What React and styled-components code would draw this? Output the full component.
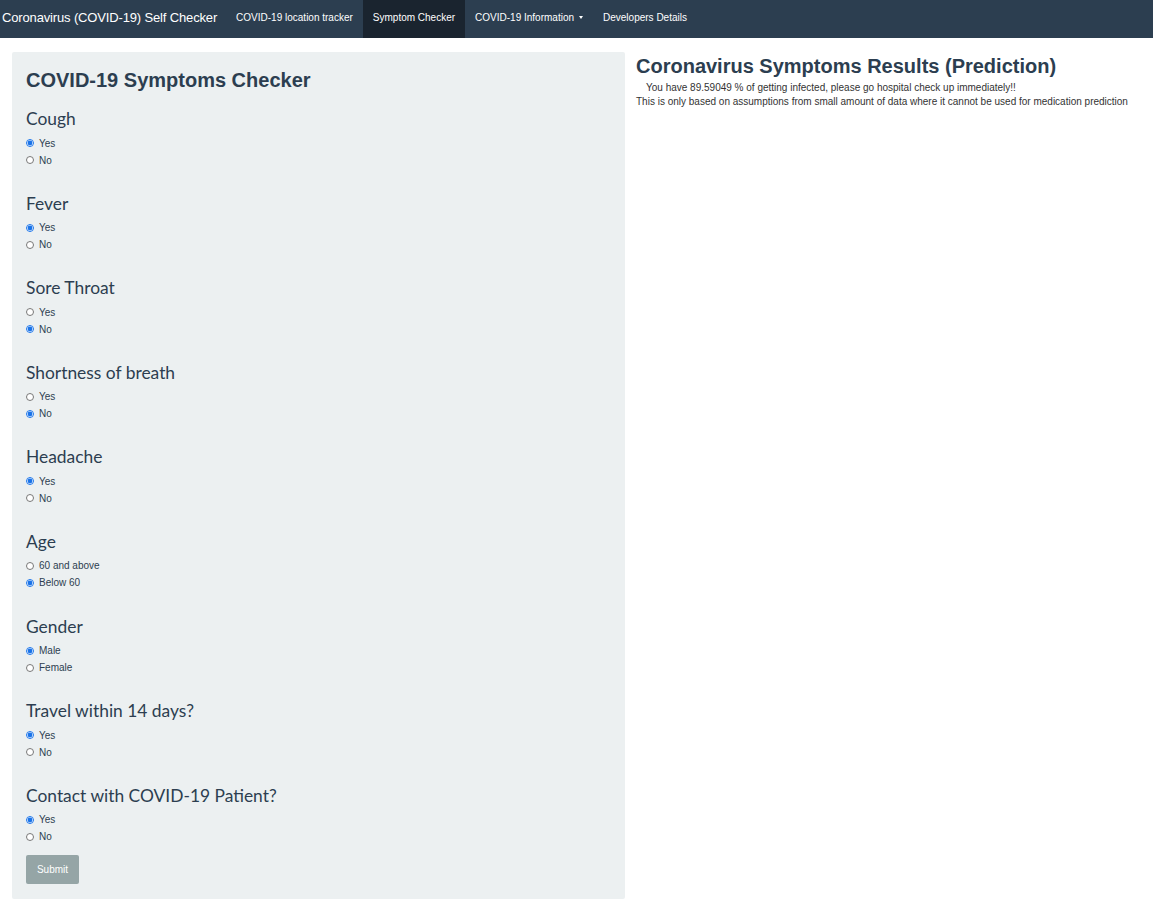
import styled, { createGlobalStyle } from "styled-components"

const GlobalStyle = createGlobalStyle`
  body {
    margin: 0;
    background: #fff;
    font-family: "Liberation Sans", Arial, sans-serif;
    color: #2c3e50;
  }
`

const questions = [
  { label: "Cough", options: ["Yes", "No"], picked: 0 },
  { label: "Fever", options: ["Yes", "No"], picked: 0 },
  { label: "Sore Throat", options: ["Yes", "No"], picked: 1 },
  { label: "Shortness of breath", options: ["Yes", "No"], picked: 1 },
  { label: "Headache", options: ["Yes", "No"], picked: 0 },
  { label: "Age", options: ["60 and above", "Below 60"], picked: 1 },
  { label: "Gender", options: ["Male", "Female"], picked: 0 },
  { label: "Travel within 14 days?", options: ["Yes", "No"], picked: 0 },
  { label: "Contact with COVID-19 Patient?", options: ["Yes", "No"], picked: 0 },
]

const navItems = [
  { text: "COVID-19 location tracker" },
  { text: "Symptom Checker", active: true },
  { text: "COVID-19 Information", caret: true },
  { text: "Developers Details" },
]

export default function App() {
  return (
    <>
      <GlobalStyle />
      <Navbar>
        <Brand>Coronavirus (COVID-19) Self Checker</Brand>
        <NavList>
          {navItems.map((item) => (
            <NavItem key={item.text} $active={item.active}>
              {item.text}
              {item.caret && <Caret />}
            </NavItem>
          ))}
        </NavList>
      </Navbar>
      <Page>
        <Well>
          <Title>COVID-19 Symptoms Checker</Title>
          {questions.map((q, i) => (
            <Group key={q.label}>
              <Label>{q.label}</Label>
              {q.options.map((opt, j) => (
                <Option key={opt}>
                  <Radio type="radio" name={"q" + i} defaultChecked={q.picked === j} />
                  <span>{opt}</span>
                </Option>
              ))}
            </Group>
          ))}
          <SubmitButton>Submit</SubmitButton>
        </Well>
        <Results>
          <ResultsTitle>Coronavirus Symptoms Results (Prediction)</ResultsTitle>
          <ResultText $indent>You have 89.59049 % of getting infected, please go hospital check up immediately!!</ResultText>
          <ResultText>
            This is only based on assumptions from small amount of data where it cannot be used for medication prediction
          </ResultText>
        </Results>
      </Page>
    </>
  )
}

const Navbar = styled.nav`
  display: flex;
  align-items: stretch;
  height: 38px;
  background: #2c3e50;
  color: #fff;
`

const Brand = styled.div`
  display: flex;
  align-items: center;
  padding: 0 9px 4px 2px;
  font-size: 13px;
  letter-spacing: -0.15px;
`

const NavList = styled.div`
  display: flex;
`

const NavItem = styled.div`
  display: flex;
  align-items: center;
  padding: 0 10px 3px;
  font-size: 10px;
  background: ${(p) => (p.$active ? "#1a242f" : "transparent")};
`

const Caret = styled.span`
  display: inline-block;
  margin-left: 5px;
  border-left: 2.5px solid transparent;
  border-right: 2.5px solid transparent;
  border-top: 3px solid #fff;
`

const Page = styled.div`
  display: grid;
  grid-template-columns: 613px 1fr;
  gap: 11px;
  padding: 14px 0 0 12px;
`

const Well = styled.div`
  background: #ecf0f1;
  border-radius: 2px;
  padding: 16px 14px 15px;
`

const Title = styled.h2`
  margin: 0 0 17px;
  font-size: 20px;
  line-height: 24px;
  font-weight: 700;
  color: #2c3e50;
`

const Group = styled.div`
  margin-bottom: 25.1px;
  &:last-of-type {
    margin-bottom: 10px;
  }
`

const Label = styled.div`
  font-family: Lato, "Liberation Sans", sans-serif;
  font-size: 17.4px;
  line-height: 20px;
  color: #2c3e50;
  margin-bottom: 5.5px;
`

const Option = styled.label`
  display: flex;
  align-items: center;
  height: 17px;
  font-size: 10px;
  color: #2c3e50;
  gap: 5px;
`

const Radio = styled.input`
  width: 8px;
  height: 8px;
  margin: 0;
  accent-color: #1a73e8;
`

const SubmitButton = styled.button`
  width: 53px;
  height: 29px;
  border: none;
  border-radius: 2px;
  background: #95a5a6;
  color: #fff;
  font-family: "Liberation Sans", Arial, sans-serif;
  font-size: 10px;
  padding: 0;
`

const Results = styled.div`
  padding-top: 2px;
`

const ResultsTitle = styled.h2`
  margin: 0 0 3px;
  font-size: 20px;
  line-height: 24px;
  font-weight: 700;
  color: #2c3e50;
`

const ResultText = styled.div`
  font-size: 10px;
  line-height: 14px;
  color: #333;
  padding-left: ${(p) => (p.$indent ? "10px" : "0")};
`
